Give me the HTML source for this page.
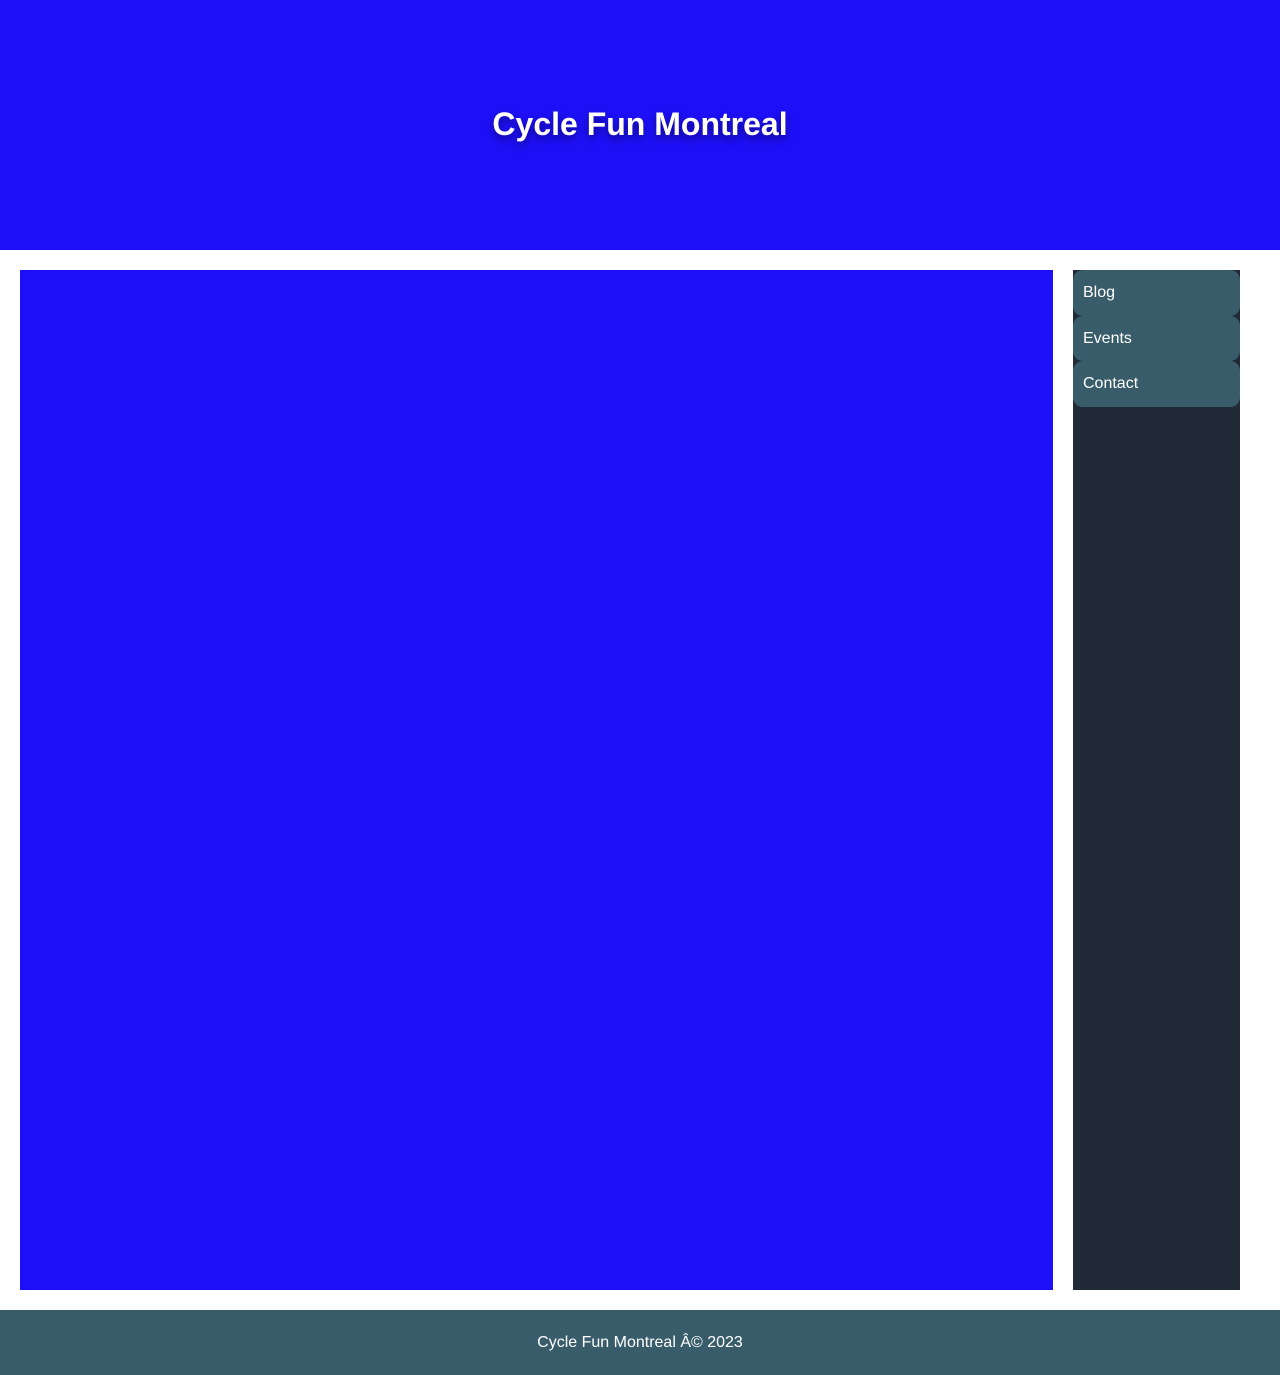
<!DOCTYPE html>
<html><head><meta charset="utf-8"><style>
*{margin:0;padding:0;box-sizing:border-box}
body{width:1280px;height:1375px;background:#fff;font-family:"Liberation Sans",sans-serif;position:relative}
header{position:absolute;left:0;top:0;width:1280px;height:250px;background:#1d10f6;display:flex;align-items:center;justify-content:center}
h1{color:#fff;font-size:32px;font-weight:bold;text-shadow:0 4px 8px rgba(0,0,0,.45);margin-top:-2px}
.main{position:absolute;left:20px;top:270px;width:1033px;height:1020px;background:#1d10f6}
.side{position:absolute;left:1073px;top:270px;width:167px;height:1020px;background:#212b37}
.side a{display:block;height:45.5px;line-height:45px;padding-left:10px;background:#385c6a;color:#fff;font-size:16px;border-radius:10px;text-decoration:none}
footer{position:absolute;left:0;top:1310px;width:1280px;height:65px;background:#385c6a;color:#fff;font-size:16px;text-align:center;line-height:65px}
</style></head><body>
<header><h1>Cycle Fun Montreal</h1></header>
<div class="main"></div>
<div class="side"><a>Blog</a><a>Events</a><a>Contact</a></div>
<footer>Cycle Fun Montreal Â© 2023</footer>
</body></html>
